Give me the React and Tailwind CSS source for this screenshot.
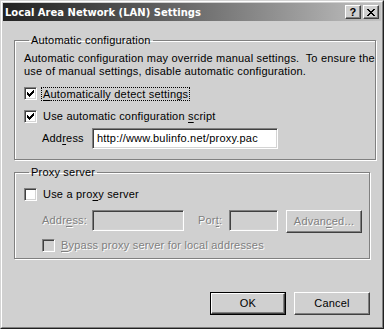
import React from "react";

const sunken =
  "border border-t-[#808080] border-l-[#808080] border-b-white border-r-white shadow-[inset_1px_1px_0_#404040,inset_-1px_-1px_0_#d4d4d4]";
const raised =
  "border border-t-white border-l-white border-b-[#404040] border-r-[#404040] shadow-[inset_-1px_-1px_0_#808080]";

const Check = () => (
  <svg width="7" height="7" viewBox="0 0 7 7" shapeRendering="crispEdges">
    <path
      fill="#000"
      d="M6 0h1v1h-1zM5 1h2v1h-2zM0 2h1v1h-1zM4 2h3v1h-3zM0 3h2v1h-2zM3 3h3v1h-3zM0 4h5v1h-5zM1 5h3v1h-3zM2 6h1v1h-1z"
    />
  </svg>
);

const CheckBox = ({ checked, disabled }) => (
  <div
    className={`w-[13px] h-[13px] flex items-center justify-center shrink-0 ${sunken} ${
      disabled ? "bg-[#d0d0d0]" : "bg-white"
    }`}
  >
    {checked && <Check />}
  </div>
);

const U = ({ children }) => <span className="underline underline-offset-[2px]">{children}</span>;

const dis = "text-[#808080] [text-shadow:1px_1px_0_#fff]";

const App = () => {
  return (
    <div
      className="w-[384px] h-[329px] bg-[#d0d0d0] border border-t-[#d4d4d4] border-l-[#d4d4d4] border-b-[#202020] border-r-[#202020] text-[11px] leading-[13px] tracking-[0.2px] text-black"
      style={{ fontFamily: "'Liberation Sans', Arial, sans-serif" }}
    >
      <div className="h-full border border-t-white border-l-white border-b-[#808080] border-r-[#808080] p-px flex flex-col">
        {/* title bar */}
        <div className="h-[18px] bg-gradient-to-r from-[#222222] to-[#c2c2c2] flex items-center pl-[2px] pr-[2px]">
          <span
            className="font-bold text-white text-[10px] tracking-normal flex-1"
            style={{ fontFamily: "'DejaVu Sans', Verdana, sans-serif" }}
          >
            Local Area Network (LAN) Settings
          </span>
          <div className={`w-[16px] h-[14px] bg-[#d0d0d0] flex items-center justify-center font-bold text-[11px] ${raised}`}>
            ?
          </div>
          <div className={`w-[16px] h-[14px] ml-[2px] bg-[#d0d0d0] flex items-center justify-center ${raised}`}>
            <svg width="8" height="7" viewBox="0 0 8 7" shapeRendering="crispEdges">
              <path fill="#000" d="M0 0h2v1h-2zM6 0h2v1h-2zM1 1h2v1h-2zM5 1h2v1h-2zM2 2h4v1h-4zM3 3h2v1h-2zM2 4h4v1h-4zM1 5h2v1h-2zM5 5h2v1h-2zM0 6h2v1h-2zM6 6h2v1h-2z" />
            </svg>
          </div>
        </div>

        <div className="px-[11px] mt-[13px] flex flex-col">
          {/* Automatic configuration */}
          <fieldset className="h-[126px] border border-[#808080] shadow-[inset_1px_1px_0_#fff,1px_1px_0_#fff] pl-[9px]">
            <legend className="ml-[5px] px-[2px]">Automatic configuration</legend>
            <p className="mt-[5px] whitespace-nowrap">
              Automatic configuration may override manual settings.&nbsp; To ensure the
              <br />
              use of manual settings, disable automatic configuration.
            </p>
            <div className="mt-[9px] flex items-center h-[13px]">
              <CheckBox checked />
              <span className="ml-[4px] px-px border border-dotted border-black leading-[12px]">
                <U>A</U>utomatically detect settings
              </span>
            </div>
            <div className="mt-[10px] flex items-center h-[13px]">
              <CheckBox checked />
              <span className="ml-[6px]">
                Use automatic configuration <U>s</U>cript
              </span>
            </div>
            <div className="mt-[5px] flex items-center pl-[18px]">
              <span className="w-[50px]">
                Add<U>r</U>ess
              </span>
              <div className={`w-[186px] h-[21px] bg-white flex items-center pl-[4px] ${sunken}`}>
                http://www.bulinfo.net/proxy.pac
              </div>
            </div>
          </fieldset>

          {/* Proxy server */}
          <fieldset className="mt-[6px] h-[93px] border border-[#808080] shadow-[inset_1px_1px_0_#fff,1px_1px_0_#fff] pl-[9px]">
            <legend className="ml-[5px] px-[2px]">Proxy server</legend>
            <div className="mt-[9px] flex items-center h-[13px]">
              <CheckBox />
              <span className="ml-[6px]">
                Use a pro<U>x</U>y server
              </span>
            </div>
            <div className="mt-[9px] flex items-start pl-[18px]">
              <span className={`w-[50px] mt-[4px] ${dis}`}>
                Addr<U>e</U>ss:
              </span>
              <div className={`w-[92px] h-[21px] ${sunken}`} />
              <span className={`ml-[14px] w-[31px] mt-[4px] ${dis}`}>
                Por<U>t</U>:
              </span>
              <div className={`w-[49px] h-[21px] ${sunken}`} />
              <div className={`ml-[8px] w-[76px] h-[23px] flex items-center justify-center ${raised} ${dis}`}>
                Advan<U>c</U>ed...
              </div>
            </div>
            <div className="mt-[6px] flex items-center h-[13px] pl-[18px]">
              <CheckBox disabled />
              <span className={`ml-[6px] ${dis}`}>
                <U>B</U>ypass proxy server for local addresses
              </span>
            </div>
          </fieldset>

          {/* buttons */}
          <div className="mt-[33px] flex justify-end gap-[8px]">
            <div className="w-[76px] h-[23px] border border-black">
              <div className={`h-full flex items-center justify-center ${raised}`}>OK</div>
            </div>
            <div className={`w-[76px] h-[23px] flex items-center justify-center ${raised}`}>Cancel</div>
          </div>
        </div>
      </div>
    </div>
  );
};

export default App;
